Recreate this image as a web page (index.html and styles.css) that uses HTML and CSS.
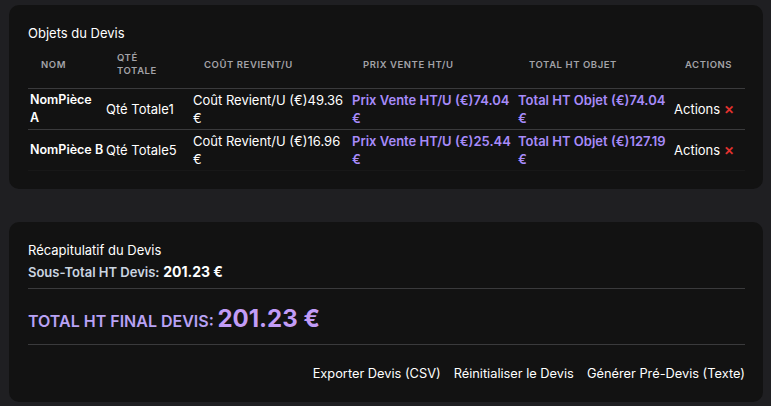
FILE: index.html
```html
<!DOCTYPE html>
<html lang="fr">
<head>
<meta charset="utf-8">
<title>Devis</title>
<link rel="stylesheet" href="styles.css">
</head>
<body>
<section class="card items">
  <h2 class="card-title">Objets du Devis</h2>
  <table class="table">
    <colgroup>
      <col class="c1"><col class="c2"><col class="c3"><col class="c4"><col class="c5"><col class="c6">
    </colgroup>
    <thead>
      <tr>
        <th>Nom</th>
        <th>Qté<br>Totale</th>
        <th>Coût Revient/U</th>
        <th>Prix Vente HT/U</th>
        <th>Total HT Objet</th>
        <th>Actions</th>
      </tr>
    </thead>
    <tbody>
      <tr>
        <td class="name">NomPièce A</td>
        <td>Qté Totale1</td>
        <td>Coût Revient/U (€)49.36 €</td>
        <td class="price">Prix Vente HT/U (€)74.04 €</td>
        <td class="price">Total HT Objet (€)74.04 €</td>
        <td>Actions <span class="del">✕</span></td>
      </tr>
      <tr>
        <td class="name nowrap">NomPièce B</td>
        <td>Qté Totale5</td>
        <td>Coût Revient/U (€)16.96 €</td>
        <td class="price">Prix Vente HT/U (€)25.44 €</td>
        <td class="price">Total HT Objet (€)127.19 €</td>
        <td>Actions <span class="del">✕</span></td>
      </tr>
    </tbody>
  </table>
</section>

<section class="card summary">
  <h2 class="card-title">Récapitulatif du Devis</h2>
  <p class="subtotal"><span class="sub-label">Sous-Total HT Devis:</span> <span class="sub-value">201.23 €</span></p>
  <div class="final"><span class="final-label">TOTAL HT FINAL DEVIS:</span> <span class="final-value">201.23 €</span></div>
  <div class="buttons">
    <button class="btn">Exporter Devis (CSV)</button>
    <button class="btn">Réinitialiser le Devis</button>
    <button class="btn">Générer Pré-Devis (Texte)</button>
  </div>
</section>
</body>
</html>
```

FILE: styles.css
```css
* { box-sizing: border-box; }

html, body {
  margin: 0;
  background: #1f1f22;
}

body {
  padding: 5px 8px 0 9px;
  font-family: Inter, "Noto Sans", sans-serif;
  color: #ffffff;
  font-size: 13px;
}

.card {
  background: #121212;
  border-radius: 10px;
  padding: 19px 18px 19px 19px;
}

.items {
  height: 184px;
}

.summary {
  margin-top: 33px;
  height: 180px;
}

.card-title {
  margin: 0;
  font-size: 13px;
  font-weight: 400;
  line-height: 18px;
  color: #ffffff;
}

.table {
  width: 100%;
  border-collapse: collapse;
  table-layout: fixed;
}

.c1 { width: 76px; }
.c2 { width: 87px; }
.c3 { width: 159px; }
.c4 { width: 166px; }
.c5 { width: 156px; }
.c6 { width: 73px; }

.table th {
  text-align: left;
  font-size: 9.5px;
  font-weight: 600;
  letter-spacing: 0.06em;
  text-transform: uppercase;
  color: #a3a3a8;
  line-height: 13px;
  padding: 9px 12px 11px 13px;
  border-bottom: 1px solid #3a3a3c;
  vertical-align: middle;
}

.table td {
  padding: 2px 0 2px 2px;
  line-height: 18px;
  font-size: 13px;
  vertical-align: middle;
  border-bottom: 1px solid #3a3a3c;
  color: #ffffff;
}

.table tbody tr:last-child td {
  border-bottom: 1px solid #181818;
}

.table td.name {
  font-weight: 600;
  font-size: 12.5px;
  padding-right: 6px;
}

.table td.nowrap {
  white-space: nowrap;
}

.table td.price {
  font-weight: 600;
  color: #a78bfa;
}

.del {
  color: #e5322f;
  font-weight: 700;
  font-size: 12px;
}

.subtotal {
  margin: 3px 0 0 0;
  line-height: 19px;
}

.sub-label {
  font-size: 13px;
  font-weight: 600;
  color: #cbd5e1;
}

.sub-value {
  font-size: 14px;
  font-weight: 700;
  color: #ffffff;
}

.final {
  margin-top: 6px;
  border-top: 1px solid #3a3a3c;
  border-bottom: 1px solid #3a3a3c;
  padding: 14px 0 6px 0;
  line-height: 32px;
}

.final-label {
  font-size: 16px;
  font-weight: 600;
  color: #b9a2f5;
}

.final-value {
  font-size: 24px;
  font-weight: 700;
  color: #c29cf7;
}

.buttons {
  display: flex;
  justify-content: flex-end;
  gap: 13px;
  margin-top: 19px;
}

.btn {
  background: none;
  border: 0;
  padding: 0;
  font-family: inherit;
  font-size: 12.8px;
  color: #ffffff;
  line-height: 20px;
  cursor: pointer;
}
```
